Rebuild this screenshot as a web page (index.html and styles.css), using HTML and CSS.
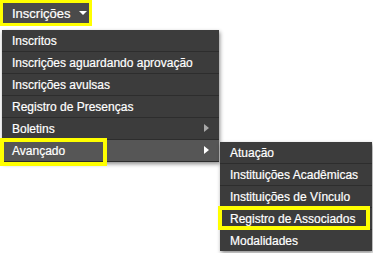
FILE: index.html
```html
<!DOCTYPE html>
<html lang="pt-BR">
<head>
    <meta charset="UTF-8">
    <meta name="viewport" content="width=device-width, initial-scale=1.0">
    <title>Menu Inscrições</title>
    <link rel="stylesheet" href="styles.css">
</head>
<body>
    <nav class="menubar">
        <div class="menu-btn">Inscrições <span class="caret"></span></div>

        <ul class="dropdown">
            <li><a class="item">Inscritos</a></li>
            <li><a class="item">Inscrições aguardando aprovação</a></li>
            <li><a class="item">Inscrições avulsas</a></li>
            <li><a class="item">Registro de Presenças</a></li>
            <li><a class="item has-sub">Boletins<span class="arrow"></span></a></li>
            <li class="open">
                <a class="item has-sub active">
                    <span class="mark mark-adv"></span>
                    Avançado<span class="arrow"></span>
                </a>
                <ul class="submenu">
                    <li><a class="item">Atuação</a></li>
                    <li><a class="item">Instituições Acadêmicas</a></li>
                    <li><a class="item">Instituições de Vínculo</a></li>
                    <li><a class="item"><span class="mark mark-reg"></span>Registro de Associados</a></li>
                    <li><a class="item">Modalidades</a></li>
                </ul>
            </li>
        </ul>
    </nav>
</body>
</html>
```

FILE: styles.css
```css
html,
body {
    min-height: 100vh;
}

body {
    margin: 0;
    padding: 0;
    background-color: #fff;
    font-family: 'Liberation Sans', Arial, sans-serif;
    font-size: 12px;
    color: #fff;
}

.menubar {
    display: flex;
    flex-direction: column;
    align-items: flex-start;
    min-height: 253px;
}

/* top button with the yellow frame */
.menu-btn {
    display: flex;
    align-items: center;
    width: 77px;
    height: 20px;
    padding-left: 9px;
    border: 3px solid #ffff00;
    background-color: #4a4a4a;
    font-size: 13px;
    -webkit-text-stroke: 0.2px #fff;
}

.caret {
    margin-left: 8px;
    width: 0;
    height: 0;
    border-left: 4px solid transparent;
    border-right: 4px solid transparent;
    border-top: 4px solid #fff;
}

.dropdown,
.submenu {
    list-style: none;
    margin: 0;
    padding: 0;
    background-color: #3c3c3c;
    box-shadow: 1px 2px 4px rgba(0, 0, 0, 0.45);
}

.dropdown {
    width: 217px;
    margin: 4px 0 0 2px;
}

.dropdown li {
    position: relative;
    border-bottom: 1px solid #2d2d2d;
}

.submenu li:last-child {
    border-bottom: none;
}

.item {
    position: relative;
    display: flex;
    align-items: center;
    height: 21px;
    padding-left: 10px;
    white-space: nowrap;
    -webkit-text-stroke: 0.2px #fff;
}

.item.active {
    background-color: #565656;
}

.arrow {
    position: absolute;
    right: 10px;
    top: 6px;
    width: 0;
    height: 0;
    border-top: 4.5px solid transparent;
    border-bottom: 4.5px solid transparent;
    border-left: 5px solid #a8a8a8;
}

.active > .arrow {
    border-left-color: #fff;
}

.submenu {
    position: absolute;
    left: 218px;
    top: 2px;
    width: 152px;
}

/* yellow annotation boxes */
.mark {
    position: absolute;
    border: 4px solid #ffff00;
    pointer-events: none;
}

.mark-adv {
    left: -2px;
    top: -2px;
    width: 99px;
    height: 20px;
}

.mark-reg {
    left: -2px;
    top: -2px;
    width: 144px;
    height: 16px;
}
```
